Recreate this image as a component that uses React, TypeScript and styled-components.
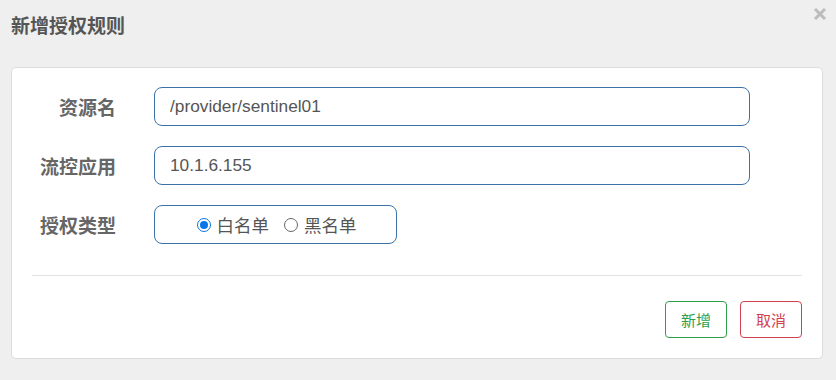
import React from "react";
import styled, { createGlobalStyle } from "styled-components";

const Global = createGlobalStyle`
  html, body { margin: 0; padding: 0; background: #efefef; }
  body { font-family: "Liberation Sans", "Noto Sans CJK SC", sans-serif; }
  * { box-sizing: border-box; }
`;

const Page = styled.div`
  width: 836px;
  height: 380px;
  padding: 0 13px 0 11px;
  background: #efefef;
`;

const Header = styled.div`
  height: 67px;
  display: flex;
  justify-content: space-between;
  align-items: flex-start;
  margin-right: -5px;
`;

const Title = styled.h4`
  margin: 16px 0 0;
  font-size: 19px;
  line-height: 22px;
  font-weight: bold;
  color: #555;
  font-family: "Liberation Sans", "Noto Sans CJK SC", sans-serif;
`;

const Close = styled.button`
  border: 0;
  background: none;
  padding: 0;
  margin-top: 6px;
  width: 16px;
  height: 16px;
  display: flex;
  align-items: center;
  justify-content: center;
  cursor: pointer;
`;

const Card = styled.div`
  background: #fff;
  border: 1px solid #dcdcdc;
  border-radius: 5px;
  padding: 19px 20px 20px 0;
`;

const Form = styled.div`
  display: flex;
  flex-direction: column;
  gap: 20px;
`;

const Row = styled.div`
  display: grid;
  grid-template-columns: 104px 596px;
  column-gap: 38px;
  align-items: center;
`;

const Label = styled.label`
  text-align: right;
  font-size: 19px;
  font-weight: bold;
  color: #666;
  font-family: "Noto Sans CJK SC", sans-serif;
`;

const Input = styled.input`
  height: 39px;
  width: 100%;
  border: 1px solid #3b73a8;
  border-radius: 8px;
  padding: 0 15px;
  font-size: 17.3px;
  color: #555;
  font-family: "Liberation Sans", "Noto Sans CJK SC", sans-serif;
  outline: none;
`;

const RadioBox = styled.div`
  height: 39px;
  width: 243px;
  border: 1px solid #3b73a8;
  border-radius: 8px;
  display: flex;
  align-items: center;
  justify-content: center;
  gap: 15px;
  padding-left: 2px;
`;

const RadioLabel = styled.label`
  display: flex;
  align-items: center;
  gap: 6px;
  font-size: 17.5px;
  color: #555;
  font-family: "Noto Sans CJK SC", sans-serif;
`;

const RadioDot = styled.span<{ $on?: boolean }>`
  width: 14px;
  height: 14px;
  border-radius: 50%;
  border: ${(p) => (p.$on ? "1.5px solid #0a75e8" : "1.5px solid #666")};
  background: #fff;
  display: flex;
  align-items: center;
  justify-content: center;
  &::after {
    content: "";
    width: 8px;
    height: 8px;
    border-radius: 50%;
    background: ${(p) => (p.$on ? "#0a75e8" : "transparent")};
  }
`;

const Divider = styled.hr`
  margin: 31px 0 0 20px;
  border: 0;
  border-top: 1px solid #e2e2e2;
`;

const Footer = styled.div`
  display: flex;
  justify-content: flex-end;
  gap: 13px;
  margin-top: 25px;
`;

const Btn = styled.button<{ $tone: string }>`
  width: 62px;
  height: 37px;
  background: #fff;
  border: 1px solid ${(p) => p.$tone};
  color: ${(p) => p.$tone};
  border-radius: 4px;
  font-size: 15px;
  font-family: "Noto Sans CJK SC", sans-serif;
  padding: 0;
  cursor: pointer;
`;

export default function App() {
  return (
    <>
      <Global />
      <Page>
        <Header>
          <Title>新增授权规则</Title>
          <Close aria-label="close">
            <svg width="14" height="14" viewBox="0 0 14 14">
              <path d="M2 2 L12 12 M12 2 L2 12" stroke="#bcbcbc" strokeWidth="3" strokeLinecap="butt" />
            </svg>
          </Close>
        </Header>
        <Card>
          <Form>
            <Row>
              <Label>资源名</Label>
              <Input defaultValue="/provider/sentinel01" />
            </Row>
            <Row>
              <Label>流控应用</Label>
              <Input defaultValue="10.1.6.155" />
            </Row>
            <Row>
              <Label>授权类型</Label>
              <RadioBox>
                <RadioLabel>
                  <RadioDot $on />
                  白名单
                </RadioLabel>
                <RadioLabel>
                  <RadioDot />
                  黑名单
                </RadioLabel>
              </RadioBox>
            </Row>
          </Form>
          <Divider />
          <Footer>
            <Btn $tone="#2ea04a">新增</Btn>
            <Btn $tone="#d2404f">取消</Btn>
          </Footer>
        </Card>
      </Page>
    </>
  );
}
